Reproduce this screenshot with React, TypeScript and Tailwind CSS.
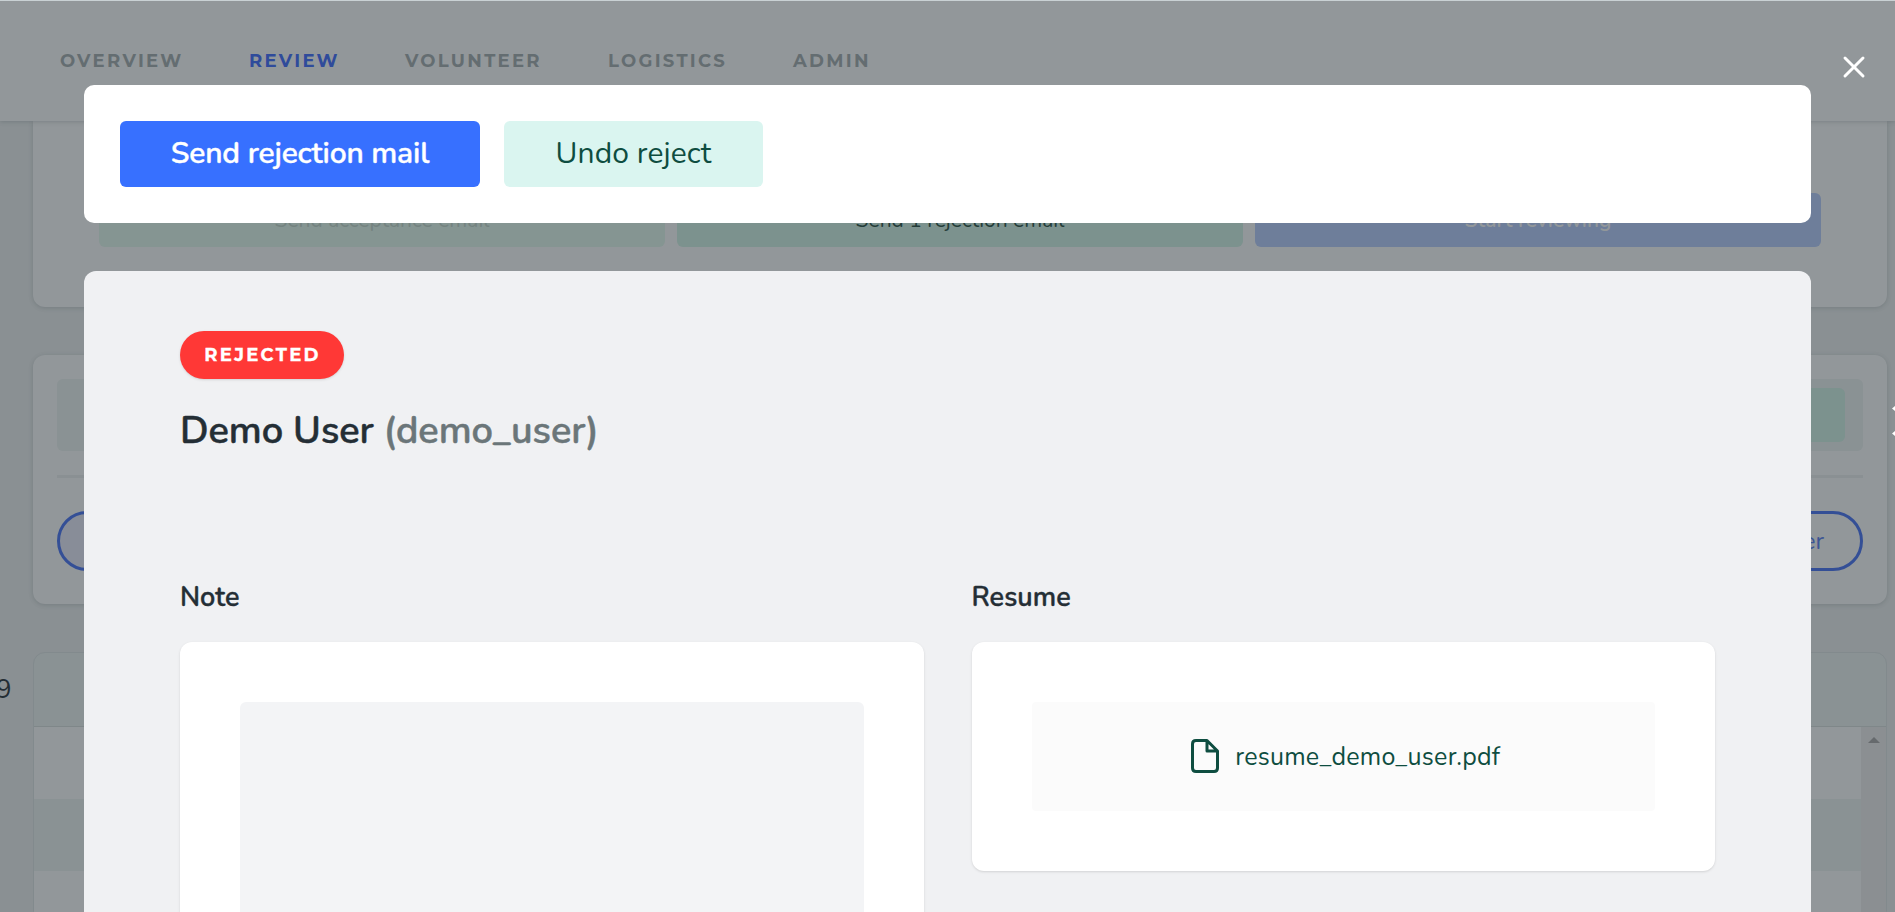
import { X } from "lucide-react";

const nav = [
  { label: "OVERVIEW", cls: "w-[122px] text-[#646d71]" },
  { label: "REVIEW", cls: "w-[89px] text-[#2f4b9b]" },
  { label: "VOLUNTEER", cls: "w-[136px] text-[#646d71]" },
  { label: "LOGISTICS", cls: "w-[118px] text-[#646d71]" },
  { label: "ADMIN", cls: "w-[77px] text-[#646d71]" },
];

function Background() {
  return (
    <div className="flex h-[912px] flex-col overflow-hidden bg-[#8a9093]">
      <header className="z-10 flex h-[121px] shrink-0 items-center gap-[67px] border-t border-[#c9d1d4] bg-[#92979a] pl-[60px] shadow-[0_1px_4px_rgba(60,70,75,0.25)]">
        {nav.map((n) => (
          <span key={n.label} className={"font-[Montserrat,Inter,sans-serif] whitespace-nowrap text-[18px] font-bold tracking-[2.3px] " + n.cls}>{n.label}</span>
        ))}
      </header>
      <div className="ml-[33px] flex w-[1854px] flex-col">
        <section className="flex h-[186px] items-end gap-3 rounded-b-xl bg-[#92979a] px-[66px] pb-[60px] text-[21px] shadow-[0_1px_4px_rgba(60,70,75,0.25)]">
          <div className="flex h-[54px] flex-1 items-center justify-center rounded-md bg-[#859592] pt-[2px] text-[#748380]">Send acceptance email</div>
          <div className="flex h-[54px] flex-1 items-center justify-center rounded-md bg-[#7c928e] pt-[2px] text-[#243d39]">Send 1 rejection email</div>
          <div className="flex h-[54px] flex-1 items-center justify-center rounded-md bg-[#6e7e9a] pt-[2px] font-semibold text-[#92979a]">Start reviewing</div>
        </section>
        <section className="mt-12 flex h-[249px] flex-col rounded-xl bg-[#92979a] px-6 pt-6 shadow-[0_1px_4px_rgba(60,70,75,0.25)]">
          <div className="flex h-[72px] shrink-0 justify-end rounded-md bg-[#8a9294] py-[9px] pr-[18px]">
            <div className="w-40 rounded-md bg-[#7c928e]" />
          </div>
          <div className="mt-6 h-[3px] shrink-0 bg-[#8a9093]" />
          <div className="mt-[33px] flex justify-between">
            <div className="h-15 w-44 rounded-full border-3 border-[#344f96] bg-[#888d98]" />
            <div className="flex h-15 w-44 items-center justify-end rounded-full border-3 border-[#344f96] pr-9 text-2xl text-[#3c5594]">Filter</div>
          </div>
        </section>
        <section className="mt-12 flex h-[260px] flex-col rounded-t-xl border border-[#828a8d] bg-[#8a9294]">
          <div className="h-[74px] shrink-0 border-b border-[#7f8789]" />
          <div className="flex flex-1">
            <div className="flex-1">
              <div className="h-[72px] bg-[#92979a]" />
              <div className="h-[72px] bg-[#8a9294]" />
              <div className="h-[42px] bg-[#92979a]" />
            </div>
            <div className="flex w-[25px] justify-center bg-[#8b8f92] pt-[10px]">
              <svg width="12" height="6"><path d="M0 6 6 0l6 6z" fill="#666a6d" /></svg>
            </div>
          </div>
        </section>
      </div>
    </div>
  );
}

export default function App() {
  return (
    <main className="relative h-[912px] w-[1895px] overflow-hidden font-[Nunito,'Noto_Sans',sans-serif]">
      <Background />
      <div className="absolute inset-0 z-20 flex flex-col items-center pt-[85px]">
        <section className="flex h-[138px] w-[1727px] shrink-0 items-center gap-6 rounded-[10px] bg-white px-9">
          <button className="flex h-[66px] w-[360px] items-center justify-center rounded-md bg-[#3770ff] pb-[2px] text-[30px] font-semibold tracking-[-0.17px] whitespace-nowrap text-white [-webkit-text-stroke:0.4px]">Send rejection mail</button>
          <button className="flex h-[66px] w-[259px] items-center justify-center rounded-md bg-[#daf5f0] pb-[2px] text-[30px] tracking-[0.1px] whitespace-nowrap text-[#0e4d40]">Undo reject</button>
        </section>
        <section className="mt-12 flex h-[641px] w-[1727px] shrink-0 flex-col rounded-t-xl bg-[#f0f1f3] px-24 pt-[60px]">
          <div className="flex h-12 w-[164px] shrink-0 items-center justify-center rounded-full bg-[#ff3836] pl-px font-[Montserrat,Inter,sans-serif] text-[18px] font-bold tracking-[2.3px] text-white shadow-sm [-webkit-text-stroke:0.3px]">REJECTED</div>
          <h1 className="mt-6 flex h-[54px] shrink-0 items-center gap-[0.26em] text-[38px] font-semibold tracking-[-0.05px] whitespace-nowrap text-[#242e35] [-webkit-text-stroke:0.5px]">
            <span>Demo User</span>
            <span className="text-[#6b7679]">(demo_user)</span>
          </h1>
          <div className="mt-[115px] grid grid-cols-2 gap-12">
            <div>
              <h2 className="flex h-[70px] items-start pt-[7px] text-[27px] leading-[38px] font-semibold text-[#242e35] [-webkit-text-stroke:0.4px]">Note</h2>
              <div className="h-[320px] rounded-xl bg-white p-[60px] shadow-sm"><div className="h-[260px] rounded-md bg-[#f3f4f6]" /></div>
            </div>
            <div>
              <h2 className="flex h-[70px] items-start pt-[7px] text-[27px] leading-[38px] font-semibold tracking-[0.1px] text-[#242e35] [-webkit-text-stroke:0.4px]">Resume</h2>
              <div className="h-[229px] rounded-xl bg-white p-[60px] shadow-sm">
                <div className="flex h-[109px] items-center justify-center gap-4 rounded bg-[#fbfbfb] pl-[5px] text-[25px] tracking-[0.22px] text-[#0e4d40]">
                  <svg width="28" height="34" viewBox="0 0 28 34" fill="none" stroke="currentColor" strokeWidth="3" strokeLinejoin="round" className="mb-[2px]"><path d="M16 1.5H5Q1.5 1.5 1.5 5v24q0 3.5 3.5 3.5h18q3.5 0 3.5-3.500V12zM16 1.500v10.500h10.500" /></svg>
                  <span className="pt-[2px]">resume_demo_user.pdf</span>
                </div>
              </div>
            </div>
          </div>
        </section>
      </div>
      <button className="absolute top-[49px] right-[23px] z-30 text-white"><X size={36} strokeWidth={2} /></button>
      <span className="absolute top-[670px] -left-[4px] z-30 text-[26px] text-[#242e35]">9</span>
      <div className="absolute top-[406px] right-0 z-30 flex flex-col gap-[20px]">
        <svg width="3" height="5"><path d="M3 0 0 2.500 3 5z" fill="#fff" /></svg>
        <svg width="3" height="5"><path d="M3 0 0 2.500 3 5z" fill="#fff" /></svg>
      </div>
    </main>
  );
}
